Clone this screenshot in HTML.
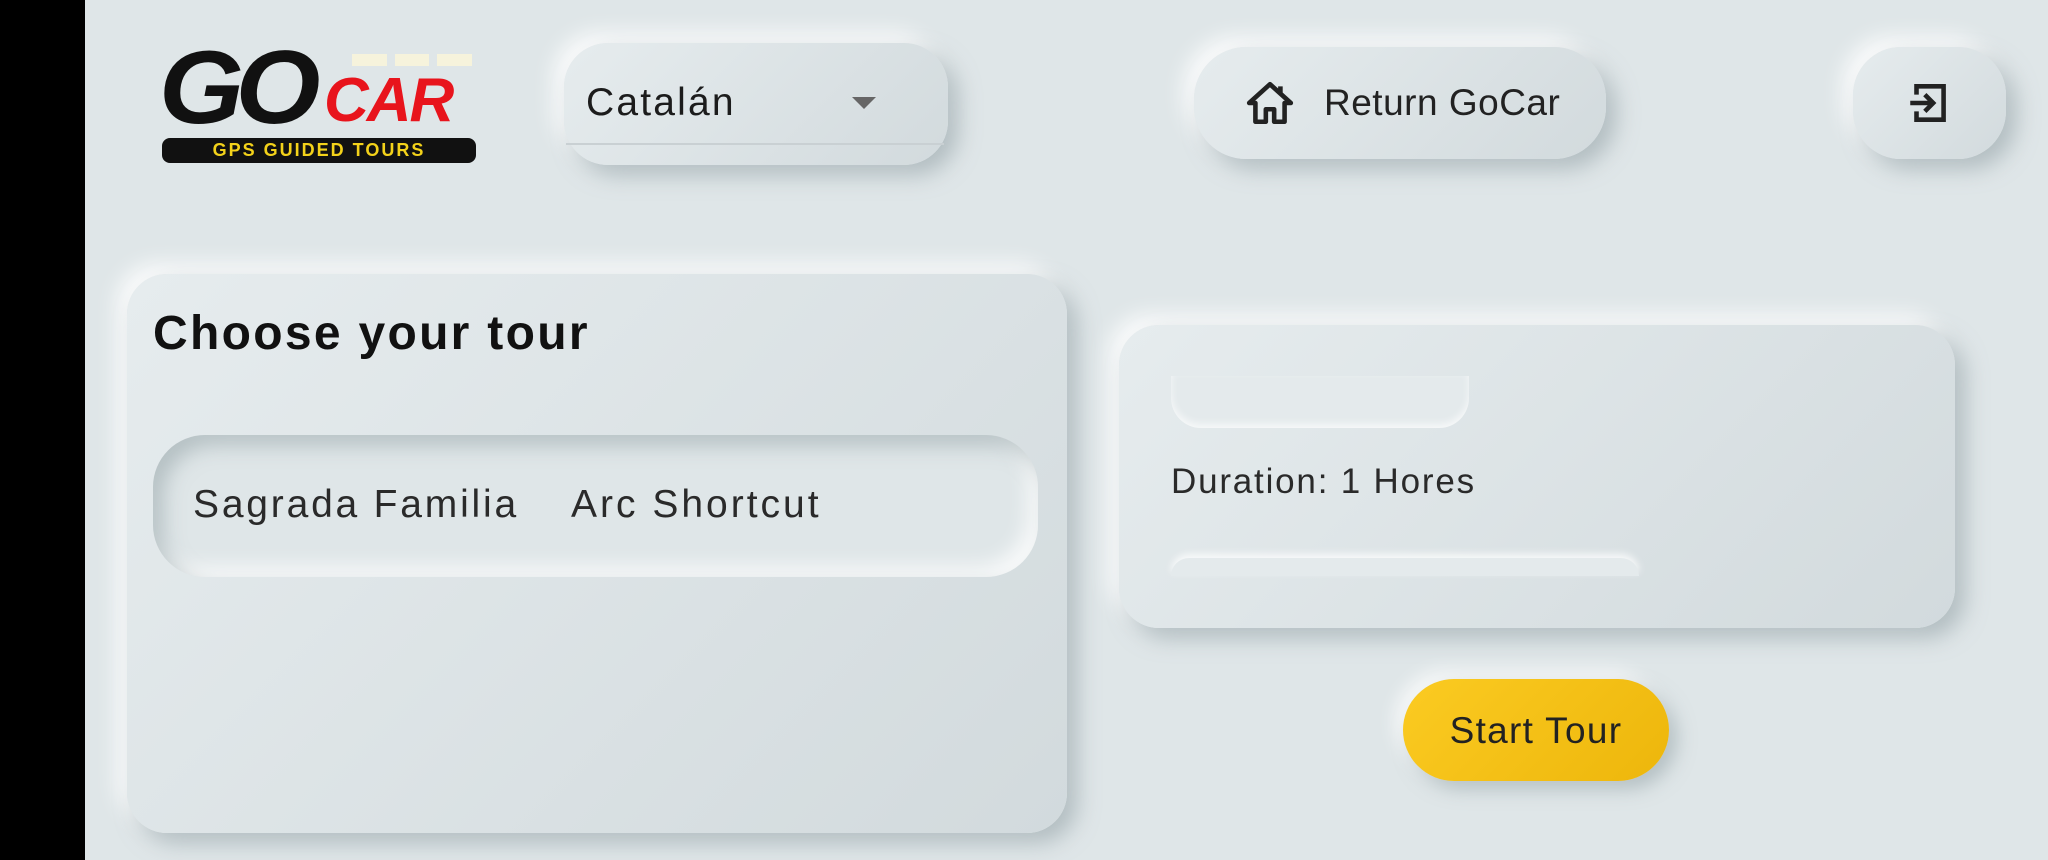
<!DOCTYPE html>
<html><head><meta charset="utf-8"><style>
*{margin:0;padding:0;box-sizing:border-box}
body{width:2048px;height:860px;background:#dfe6e8;position:relative;overflow:hidden;font-family:"Liberation Sans",sans-serif;color:#222}
.blk{position:absolute;left:0;top:0;width:85px;height:860px;background:#000}
.neu{position:absolute;background:linear-gradient(135deg,#e6ecee,#d2dadd);box-shadow:10px 10px 22px rgba(140,155,160,.55),-10px -10px 22px rgba(255,255,255,.9)}
.t{position:absolute;white-space:nowrap}
</style></head><body>
<div class="blk"></div>
<!-- logo -->
<div class="t" style="left:159px;top:36px;font:italic 900 104px/1 'Liberation Sans',sans-serif;color:#111;letter-spacing:-8px;transform:scaleX(1.05);transform-origin:left">GO</div>
<div class="t" style="left:324px;top:70px;font:italic 900 62px/1 'Liberation Sans',sans-serif;color:#e8141c;letter-spacing:-2px">CAR</div>
<div style="position:absolute;left:352px;top:54px;width:120px;height:12px;display:flex;gap:8px"><div style="flex:1;background:#f6f3dc"></div><div style="flex:1;background:#f6f3dc"></div><div style="flex:1;background:#f6f3dc"></div></div>
<div class="t" style="left:162px;top:138px;width:314px;height:25px;background:#111;border-radius:8px;color:#f3d21a;font:bold 18px/25px 'Liberation Sans',sans-serif;text-align:center;letter-spacing:2px">GPS GUIDED TOURS</div>
<!-- dropdown -->
<div class="neu" style="left:564px;top:43px;width:384px;height:122px;border-radius:44px"></div>
<div style="position:absolute;left:566px;top:143px;width:378px;height:2px;background:#c9d0d3"></div>
<div class="t" style="left:586px;top:81px;font-size:39px;color:#1c1c1c;letter-spacing:2.2px">Catalán</div>
<div style="position:absolute;left:852px;top:97px;width:0;height:0;border-left:12px solid transparent;border-right:12px solid transparent;border-top:12px solid #666"></div>
<!-- return -->
<div class="neu" style="left:1194px;top:47px;width:412px;height:112px;border-radius:52px"></div>
<svg style="position:absolute;left:1245px;top:78px" width="50" height="50" viewBox="0 0 24 24"><path d="M12 3L2 12h3v9h5v-6h4v6h5v-9h3z M17 4v4" fill="none" stroke="#222" stroke-width="2.2" stroke-linejoin="round"/></svg>
<div class="t" style="left:1324px;top:82px;font-size:37px;color:#222;letter-spacing:0.5px">Return GoCar</div>
<!-- exit -->
<div class="neu" style="left:1853px;top:47px;width:153px;height:112px;border-radius:48px"></div>
<svg style="position:absolute;left:1904px;top:78px" width="50" height="50" viewBox="0 0 24 24"><path d="M6 8V4h13v16H6v-4" fill="none" stroke="#222" stroke-width="2.2"/><path d="M3 12h11M10 8l4 4-4 4" fill="none" stroke="#222" stroke-width="2.2"/></svg>
<!-- left card -->
<div class="neu" style="left:127px;top:274px;width:940px;height:559px;border-radius:40px"></div>
<div class="t" style="left:153px;top:306px;font-weight:bold;font-size:48px;color:#111;letter-spacing:2.3px">Choose your tour</div>
<div style="position:absolute;left:153px;top:435px;width:885px;height:142px;border-radius:52px;background:#dfe6e8;box-shadow:inset 10px 10px 20px rgba(140,155,160,.5),inset -10px -10px 20px rgba(255,255,255,.85)"></div>
<div class="t" style="left:193px;top:483px;font-size:39px;color:#2a2a2a;letter-spacing:2.8px">Sagrada Familia</div>
<div class="t" style="left:571px;top:483px;font-size:39px;color:#2a2a2a;letter-spacing:3px">Arc Shortcut</div>
<!-- right card -->
<div class="neu" style="left:1119px;top:325px;width:836px;height:303px;border-radius:40px"></div>
<div style="position:absolute;left:1171px;top:376px;width:298px;height:52px;border-radius:0 0 30px 30px;background:#e4eaec;box-shadow:inset 0 -4px 8px rgba(255,255,255,.7)"></div>
<div class="t" style="left:1171px;top:462px;font-size:35px;color:#2a2a2a;letter-spacing:1.8px">Duration: 1 Hores</div>
<div style="position:absolute;left:1171px;top:558px;width:468px;height:18px;border-radius:30px 30px 0 0;background:#e4eaec;box-shadow:0 -4px 8px rgba(255,255,255,.8)"></div>
<!-- start -->
<div style="position:absolute;left:1403px;top:679px;width:266px;height:102px;border-radius:51px;background:linear-gradient(135deg,#fbcb22,#edb60b);box-shadow:8px 8px 18px rgba(140,155,160,.5),-8px -8px 18px rgba(255,255,255,.8)"></div>
<div class="t" style="left:1403px;top:710px;width:266px;text-align:center;font-size:37px;color:#222;letter-spacing:1.3px">Start Tour</div>
</body></html>
